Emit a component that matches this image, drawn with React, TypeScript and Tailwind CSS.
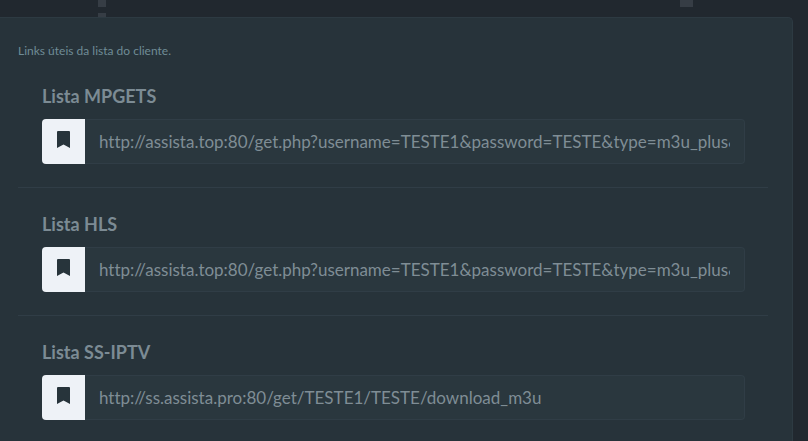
import { useId } from "react";

const links = [
    {
        label: "Lista MPGETS",
        url: "http://assista.top:80/get.php?username=TESTE1&password=TESTE&type=m3u_plus&output=mpegts",
    },
    {
        label: "Lista HLS",
        url: "http://assista.top:80/get.php?username=TESTE1&password=TESTE&type=m3u_plus&output=hls",
    },
    {
        label: "Lista SS-IPTV",
        url: "http://ss.assista.pro:80/get/TESTE1/TESTE/download_m3u",
    },
];

function BookmarkIcon() {
    return (
        <svg viewBox="0 0 13 17" className="w-[13px] h-[17px] mb-1" fill="currentColor" aria-hidden="true">
            <path d="M1 0h11a1 1 0 0 1 1 1v16L6.5 13.4 0 17V1a1 1 0 0 1 1-1z" />
        </svg>
    );
}

function LinkField({ label, url }: { label: string; url: string }) {
    const id = useId();

    return (
        <div className="pr-[23px] pb-[23px] pl-6">
            <label htmlFor={id} className="block mb-[9px] text-lg leading-7 font-bold text-[#7c8b94]">
                {label}
            </label>
            <div className="flex h-[45px]">
                <button
                    type="button"
                    aria-label={`Salvar ${label}`}
                    className="flex w-[43px] shrink-0 items-center justify-center rounded-l bg-[#eef2f7] text-[#27343b]"
                >
                    <BookmarkIcon />
                </button>
                <input
                    id={id}
                    type="text"
                    readOnly
                    defaultValue={url}
                    className="min-w-0 flex-1 rounded-r border border-l-0 border-[#303d46] bg-[#2a373e] px-3.5 text-[17px] text-[#7f8d95] outline-none [font-variant-ligatures:none]"
                />
            </div>
        </div>
    );
}

export default function App() {
    return (
        <main className="min-h-screen flex flex-col overflow-hidden bg-[#21282f] font-['Lato','Open_Sans',sans-serif]">
            <div className="flex h-[17px] items-start justify-between pl-[98px] pr-[115px]">
                <div className="flex flex-col gap-1.5">
                    <span className="h-[7px] w-2 bg-[#363d45]" />
                    <span className="h-1 w-2 bg-[#363d45]" />
                </div>
                <span className="h-[7px] w-[13px] bg-[#363d45]" />
            </div>

            <section className="mr-[15px] flex-1 rounded-tr-[5px] border-t border-r border-[#2d3a42] bg-[#27333a] pt-6 pr-6 pl-[18px]">
                <p className="mb-[22px] text-xs leading-[18px] text-[#6f8c96]">Links úteis da lista do cliente.</p>
                <div className="flex flex-col divide-y divide-[#303d46]">
                    {links.map((link, i) => (
                        <div key={link.label} className={i > 0 ? "pt-[22px]" : ""}>
                            <LinkField label={link.label} url={link.url} />
                        </div>
                    ))}
                </div>
            </section>
        </main>
    );
}
